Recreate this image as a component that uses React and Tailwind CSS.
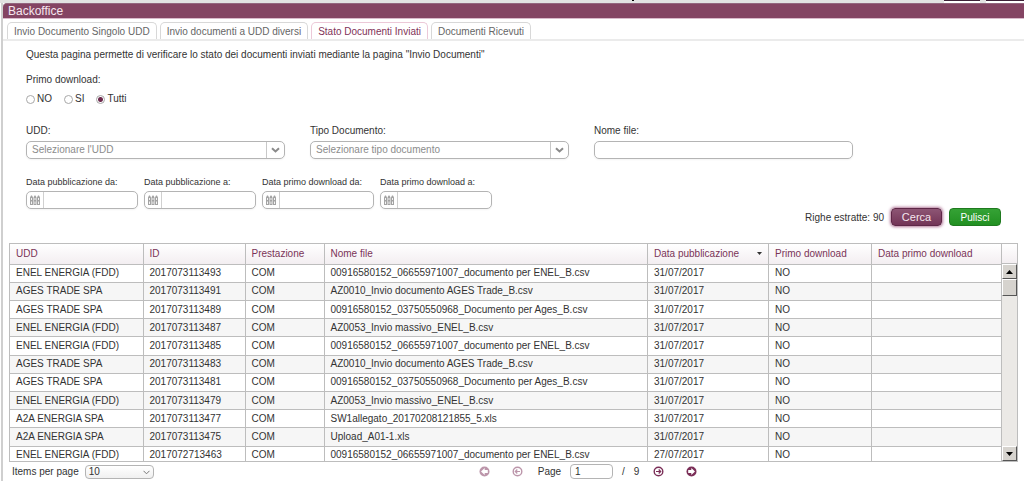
import { useState } from 'react';

const TABS = [
    'Invio Documento Singolo UDD',
    'Invio documenti a UDD diversi',
    'Stato Documenti Inviati',
    'Documenti Ricevuti',
];

const DATE_FIELDS = [
    { id: 'pubDa', label: 'Data pubblicazione da:' },
    { id: 'pubA', label: 'Data pubblicazione a:' },
    { id: 'downDa', label: 'Data primo download da:' },
    { id: 'downA', label: 'Data primo download a:' },
];

const COLUMNS = [
    { label: 'UDD', width: 'w-[133px]' },
    { label: 'ID', width: 'w-[102px]' },
    { label: 'Prestazione', width: 'w-[79px]' },
    { label: 'Nome file', width: '' },
    { label: 'Data pubblicazione', width: 'w-[121px]', sorted: true },
    { label: 'Primo download', width: 'w-[103px]' },
    { label: 'Data primo download', width: 'w-[130px]' },
];

const ROWS = [
    ['ENEL ENERGIA (FDD)', '2017073113493', '00916580152_06655971007_documento per ENEL_B.csv', '31/07/2017'],
    ['AGES TRADE SPA', '2017073113491', 'AZ0010_Invio documento AGES Trade_B.csv', '31/07/2017'],
    ['AGES TRADE SPA', '2017073113489', '00916580152_03750550968_Documento per Ages_B.csv', '31/07/2017'],
    ['ENEL ENERGIA (FDD)', '2017073113487', 'AZ0053_Invio massivo_ENEL_B.csv', '31/07/2017'],
    ['ENEL ENERGIA (FDD)', '2017073113485', '00916580152_06655971007_documento per ENEL_B.csv', '31/07/2017'],
    ['AGES TRADE SPA', '2017073113483', 'AZ0010_Invio documento AGES Trade_B.csv', '31/07/2017'],
    ['AGES TRADE SPA', '2017073113481', '00916580152_03750550968_Documento per Ages_B.csv', '31/07/2017'],
    ['ENEL ENERGIA (FDD)', '2017073113479', 'AZ0053_Invio massivo_ENEL_B.csv', '31/07/2017'],
    ['A2A ENERGIA SPA', '2017073113477', 'SW1allegato_20170208121855_5.xls', '31/07/2017'],
    ['A2A ENERGIA SPA', '2017073113475', 'Upload_A01-1.xls', '31/07/2017'],
    ['ENEL ENERGIA (FDD)', '2017072713463', '00916580152_06655971007_documento per ENEL_B.csv', '27/07/2017'],
];

const SelectField = ({ id, label, placeholder }) => (
    <div className="flex flex-col">
        <label htmlFor={id} className="h-[16px] leading-[12px] text-[10px]">
            {label}
        </label>
        <div className="relative">
            <select
                id={id}
                className="block w-full h-[18px] appearance-none rounded-[5px] border border-[#b4b4b4] bg-white pl-[5px] text-[10px] leading-[14px] text-[#8c8c8c] shadow-xs"
            >
                <option>{placeholder}</option>
            </select>
            <span className="pointer-events-none absolute inset-y-px right-px flex w-[18px] items-center justify-center border-l border-[#c8c8c8]">
                <svg width="9" height="6" viewBox="0 0 9 6" fill="none" stroke="#8a8a8a" strokeWidth="2">
                    <path d="M1 1.2 L4.5 4.4 L8 1.2" />
                </svg>
            </span>
        </div>
    </div>
);

const CalendarIcon = () => (
    <svg width="10" height="10" viewBox="0 0 10 10" fill="#a3a3a3">
        <path d="M0 2.5 L1 0.5 H2 L3 2.5 V10 H0 Z M3.5 2.5 L4.5 0.5 H5.5 L6.5 2.5 V10 H3.5 Z M7 2.5 L8 0.5 H9 L10 2.5 V10 H7 Z" />
        <path d="M1 3 H2 V5 H1 Z M1 6.5 H2 V9 H1 Z M4.5 3 H5.5 V5 H4.5 Z M4.5 6.5 H5.5 V9 H4.5 Z M8 3 H9 V5 H8 Z M8 6.5 H9 V9 H8 Z" fill="#f4f4f4" />
    </svg>
);

const DateField = ({ id, label }) => (
    <div className="flex flex-col">
        <label htmlFor={id} className="h-[15px] leading-[12px] text-[9px] whitespace-nowrap">
            {label}
        </label>
        <div className="flex h-[18px] rounded-[5px] border border-[#b4b4b4] bg-white shadow-xs">
            <span className="flex w-[17px] items-center justify-center border-r border-[#d0d0d0]">
                <CalendarIcon />
            </span>
            <input id={id} type="text" className="min-w-0 flex-1 px-1 text-[10px] outline-none" />
        </div>
    </div>
);

const PagerButton = ({ label, kind, disabled }) => (
    <button type="button" aria-label={label} disabled={disabled} className="disabled:opacity-50">
        <svg width="11" height="11" viewBox="0 0 11 11" fill="none" stroke="#7b2f58">
            {kind === 'prev' && <path d="M8 5.5 H3.5 M5.3 3.5 L3.3 5.5 L5.3 7.5" strokeWidth="1.2" />}
            {kind === 'next' && <path d="M3 5.5 H7.5 M5.7 3.5 L7.7 5.5 L5.7 7.5" strokeWidth="1.2" />}
            {(kind === 'prev' || kind === 'next') && <circle cx="5.5" cy="5.5" r="4.3" strokeWidth="1.4" />}
            {(kind === 'first' || kind === 'last') && <circle cx="5.5" cy="5.5" r="5" fill="#7b2f58" stroke="none" />}
            {kind === 'first' && <path d="M2 5.5 L5.7 2 V4 H8.8 V7 H5.7 V9 Z" fill="#fff" stroke="none" />}
            {kind === 'last' && <path d="M9 5.5 L5.3 2 V4 H2.2 V7 H5.3 V9 Z" fill="#fff" stroke="none" />}
        </svg>
    </button>
);

const ScrollButton = ({ label, up }) => (
    <button
        type="button"
        aria-label={label}
        className="flex h-[15px] w-full shrink-0 items-center justify-center border border-t-white border-l-white border-r-[#555] border-b-[#555] bg-[#d6d3ce]"
    >
        <svg width="7" height="4" viewBox="0 0 7 4" fill="#000">
            <path d={up ? 'M3.5 0 L7 4 H0 Z' : 'M0 0 H7 L3.5 4 Z'} />
        </svg>
    </button>
);

const App = () => {
    const [tab, setTab] = useState(2);
    const [download, setDownload] = useState('Tutti');
    const [page, setPage] = useState('1');

    return (
        <div className="bg-white font-['Liberation_Sans',Arial,sans-serif] text-[10px] text-[#333]">
            <div className="flex h-[3px] items-start justify-end bg-[#e2e2e2]">
                <span className="mr-auto ml-[632px] h-px w-[2px] bg-black" />
                <span className="h-[3px] w-[36px] border-b-2 border-white bg-[#3d2138]" />
                <span className="ml-[6px] h-[3px] w-[38px] border-b-2 border-white bg-[#3d2138]" />
            </div>

            <div className="ml-px border-l-2 border-[#cfcfcf]">
                <h1 className="h-[16px] rounded-tl-sm border-t border-b border-t-[#93667f] border-b-[#d9b9cb] bg-[#844463] pl-[5px] text-[12px] leading-[14px] text-[#f6e6ee]">
                    Backoffice
                </h1>

                <div className="flex h-[22px] items-end gap-[3px] border-b-2 border-[#ebebeb] pl-[4px]">
                    {TABS.map((name, i) => (
                        <button
                            key={name}
                            type="button"
                            onClick={() => setTab(i)}
                            className={
                                'h-[17px] rounded-t-[5px] border border-b-0 px-[6px] text-[10px] whitespace-nowrap ' +
                                (tab === i
                                    ? 'border-[#ecc9d8] text-[#7f3358]'
                                    : 'border-[#d8d8d8] text-[#666]')
                            }
                        >
                            {name}
                        </button>
                    ))}
                </div>

                <form className="pl-[23px]" onSubmit={(e) => e.preventDefault()}>
                    <p className="pt-[7px] text-[10px] leading-[14px]">
                        Questa pagina permette di verificare lo stato dei documenti inviati mediante la pagina
                        &quot;Invio Documenti&quot;
                    </p>

                    <fieldset className="pt-[11px]">
                        <legend className="float-left w-full leading-[14px]">Primo download:</legend>
                        <div className="clear-left flex gap-[12px] pt-[5px]">
                            {['NO', 'SI', 'Tutti'].map((value) => (
                                <label key={value} className="flex items-center gap-[2px] leading-[14px]">
                                    <input
                                        type="radio"
                                        name="download"
                                        value={value}
                                        checked={download === value}
                                        onChange={() => setDownload(value)}
                                        className="size-[9px] appearance-none rounded-full border border-[#a8a8a8] bg-white checked:bg-[radial-gradient(circle,#6d2a4d_2px,#fff_3px)]"
                                    />
                                    {value}
                                </label>
                            ))}
                        </div>
                    </fieldset>

                    <div className="grid max-w-[827px] grid-cols-3 gap-[25px] pt-[19px]">
                        <SelectField id="udd" label="UDD:" placeholder="Selezionare l'UDD" />
                        <SelectField id="tipo" label="Tipo Documento:" placeholder="Selezionare tipo documento" />
                        <div className="flex flex-col">
                            <label htmlFor="nomeFile" className="h-[16px] leading-[12px]">
                                Nome file:
                            </label>
                            <input
                                id="nomeFile"
                                type="text"
                                className="h-[18px] w-full rounded-[5px] border border-[#b4b4b4] px-[5px] shadow-xs"
                            />
                        </div>
                    </div>

                    <div className="grid max-w-[466px] grid-cols-4 gap-[6px] pt-[17px]">
                        {DATE_FIELDS.map((field) => (
                            <DateField key={field.id} {...field} />
                        ))}
                    </div>

                    <div className="-mt-[2px] flex h-[20px] items-center justify-end gap-[7px] pr-[23px]">
                        <output className="text-[10px]">Righe estratte: 90</output>
                        <button
                            type="submit"
                            className="h-[18px] w-[51px] rounded-[4px] border border-[#5e2747] bg-linear-to-b from-[#8d5574] to-[#733457] text-[11px] text-[#f5e6ee] shadow-[0_0_3px_1px_#b27798]"
                        >
                            Cerca
                        </button>
                        <button
                            type="reset"
                            className="h-[18px] w-[52px] rounded-[4px] border border-[#1f7a1f] bg-linear-to-b from-[#35a235] to-[#219021] text-[10px] text-white"
                        >
                            Pulisci
                        </button>
                    </div>
                </form>

                <div className="mt-[16px] mr-[6px] ml-[6px] flex h-[219px] overflow-hidden border border-[#bdbdbd]">
                    <div className="min-w-0 flex-1">
                        <table className="h-[221px] w-full table-fixed border-collapse">
                            <thead>
                                <tr className="h-[20px] bg-linear-to-b from-white to-[#f3eef1]">
                                    {COLUMNS.map((col) => (
                                        <th
                                            key={col.label}
                                            className={
                                                'border-r border-b border-[#bdbdbd] px-[6px] py-0 text-left text-[10px] leading-[14px] font-normal whitespace-nowrap text-[#7a3457] ' +
                                                col.width
                                            }
                                        >
                                            <span className="flex items-center justify-between">
                                                {col.label}
                                                {col.sorted && (
                                                    <svg width="5" height="3" viewBox="0 0 5 3" fill="#333">
                                                        <path d="M0 0 H5 L2.5 3 Z" />
                                                    </svg>
                                                )}
                                            </span>
                                        </th>
                                    ))}
                                </tr>
                            </thead>
                            <tbody>
                                {ROWS.map(([udd, id, file, date]) => (
                                    <tr key={id} className="even:bg-[#f6f6f6]">
                                        {[udd, id, 'COM', file, date, 'NO', ''].map((cell, i) => (
                                            <td
                                                key={i}
                                                className="border-r border-b border-[#bdbdbd] px-[6px] py-0 leading-[14px] whitespace-nowrap"
                                            >
                                                {cell}
                                            </td>
                                        ))}
                                    </tr>
                                ))}
                            </tbody>
                        </table>
                    </div>
                    <div className="flex w-[15px] flex-col bg-[#ebe9e6]">
                        <div className="h-[20px] shrink-0 border-b border-[#bdbdbd] bg-linear-to-b from-white to-[#f3eef1]" />
                        <ScrollButton label="Scorri in alto" up />
                        <div className="h-[17px] border border-t-white border-l-white border-r-[#555] border-b-[#555] bg-[#d6d3ce]" />
                        <div className="flex-1" />
                        <ScrollButton label="Scorri in basso" />
                    </div>
                </div>

                <div className="flex h-[19px] items-center pl-[9px]">
                    <label htmlFor="perPage">Items per page</label>
                    <div className="relative ml-[6px]">
                        <select
                            id="perPage"
                            className="block h-[14px] w-[69px] appearance-none rounded-[4px] border border-[#b4b4b4] bg-linear-to-b from-white to-[#f0f0f0] pl-[3px] text-[10px] leading-[12px]"
                        >
                            <option>10</option>
                        </select>
                        <svg
                            className="pointer-events-none absolute top-[5px] right-[4px]"
                            width="7"
                            height="5"
                            viewBox="0 0 7 5"
                            fill="none"
                            stroke="#777"
                        >
                            <path d="M0.5 0.8 L3.5 3.8 L6.5 0.8" />
                        </svg>
                    </div>
                    <div className="ml-[325px] flex items-center">
                        <div className="flex items-center gap-[22px]">
                            <PagerButton label="Prima pagina" kind="first" disabled />
                            <PagerButton label="Pagina precedente" kind="prev" disabled />
                        </div>
                        <label htmlFor="page" className="ml-[15px]">
                            Page
                        </label>
                        <input
                            id="page"
                            type="text"
                            value={page}
                            onChange={(e) => setPage(e.target.value)}
                            className="ml-[9px] h-[15px] w-[43px] rounded-[4px] border border-[#b4b4b4] px-[4px] text-[10px]"
                        />
                        <span className="ml-[9px] flex gap-[9px]">
                            <span>/</span>
                            <span>9</span>
                        </span>
                        <div className="ml-[14px] flex items-center gap-[22px]">
                            <PagerButton label="Pagina successiva" kind="next" />
                            <PagerButton label="Ultima pagina" kind="last" />
                        </div>
                    </div>
                </div>
            </div>
        </div>
    );
};

export default App;
